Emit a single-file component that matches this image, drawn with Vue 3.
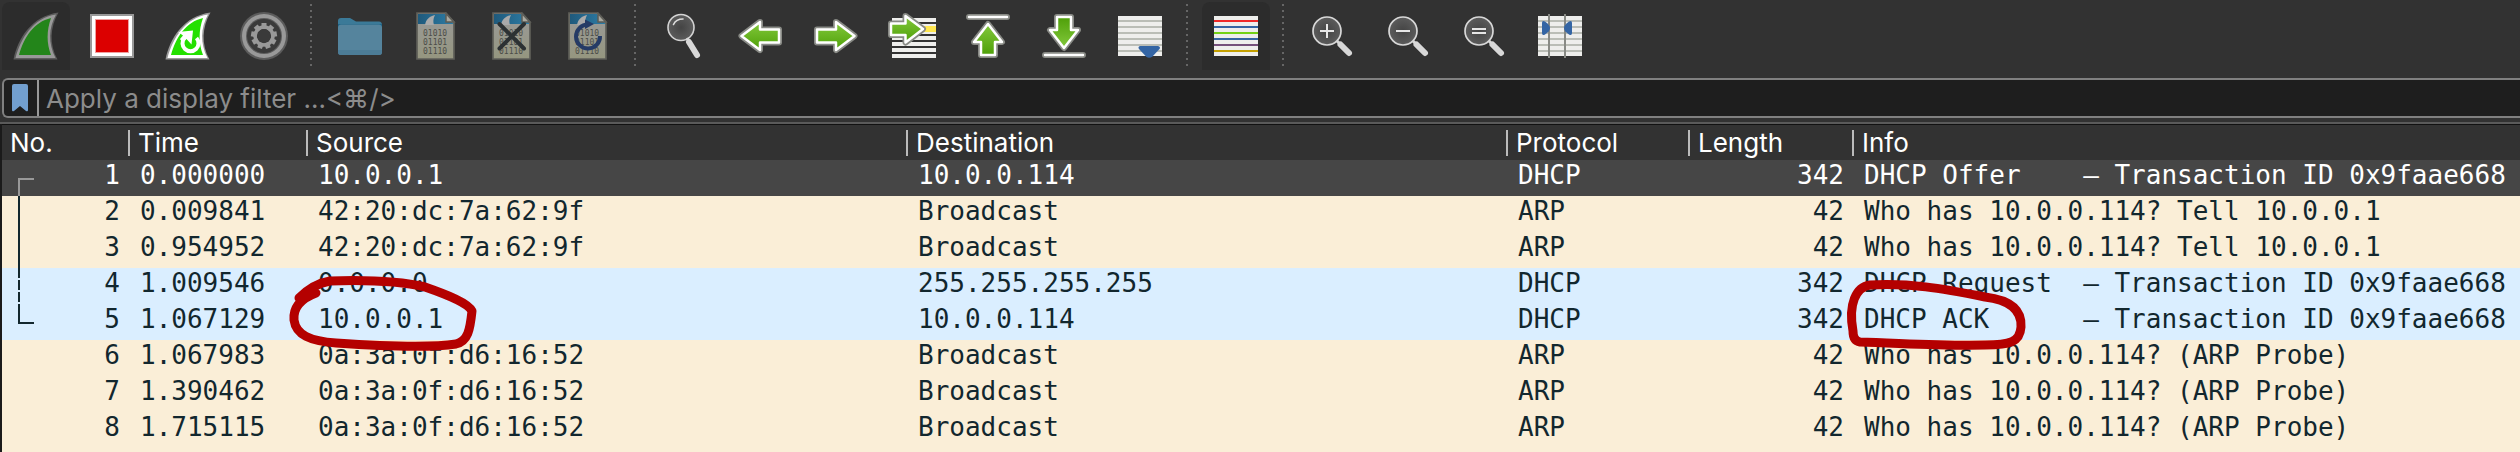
<script setup>
const icons = [
  { id: 'start', label: 'Start capture', on: true },
  { id: 'stop', label: 'Stop capture' },
  { id: 'restart', label: 'Restart capture' },
  { id: 'gear', label: 'Capture options' },
  { id: 'sep1', sep: true },
  { id: 'open', label: 'Open file' },
  { id: 'save', label: 'Save file' },
  { id: 'close', label: 'Close file' },
  { id: 'reload', label: 'Reload file' },
  { id: 'sep2', sep: true },
  { id: 'find', label: 'Find packet' },
  { id: 'prev', label: 'Previous packet' },
  { id: 'next', label: 'Next packet' },
  { id: 'goto', label: 'Go to packet' },
  { id: 'first', label: 'First packet' },
  { id: 'last', label: 'Last packet' },
  { id: 'auto', label: 'Auto scroll' },
  { id: 'sep3', sep: true },
  { id: 'color', label: 'Colorize', on: true },
  { id: 'sep4', sep: true },
  { id: 'zin', label: 'Zoom in' },
  { id: 'zout', label: 'Zoom out' },
  { id: 'znorm', label: 'Normal size' },
  { id: 'cols', label: 'Resize columns' },
]
const sideArrow = 'M5 17.500H24V10L42.500 24L24 38V30.500H5Z'
const upArrow = 'M24 12L38 30H31V43H17V30H10Z'
const arrows = {
  prev: sideArrow,
  next: sideArrow,
  goto: 'M3 11.500H17.500V4L35 17L17.500 30.500V23H3Z',
  first: upArrow,
  last: upArrow,
}
const stripes = ['#ef2929', '#3465a4', '#73d216', '#3465a4', '#75507b', '#c4a000']
const columns = ['No.', 'Time', 'Source', 'Destination', 'Protocol', 'Length', 'Info']
const probe = 'Who has 10.0.0.114? (ARP Probe)'
const tell = 'Who has 10.0.0.114? Tell 10.0.0.1'
const rows = [
  { c: [1, '0.000000', '10.0.0.1', '10.0.0.114', 'DHCP', 342, 'DHCP Offer    – Transaction ID 0x9faae668'], k: 'sel', t: 'M32 19H17V36' },
  { c: [2, '0.009841', '42:20:dc:7a:62:9f', 'Broadcast', 'ARP', 42, tell], k: 'arp', t: 'M17 0V36' },
  { c: [3, '0.954952', '42:20:dc:7a:62:9f', 'Broadcast', 'ARP', 42, tell], k: 'arp', t: 'M17 0V36' },
  { c: [4, '1.009546', '0.0.0.0', '255.255.255.255', 'DHCP', 342, 'DHCP Request  – Transaction ID 0x9faae668'], k: 'dhcp', t: 'M17 0V10M17 12V22M17 24V34' },
  { c: [5, '1.067129', '10.0.0.1', '10.0.0.114', 'DHCP', 342, 'DHCP ACK      – Transaction ID 0x9faae668'], k: 'dhcp', t: 'M17 0V19H32' },
  { c: [6, '1.067983', '0a:3a:0f:d6:16:52', 'Broadcast', 'ARP', 42, probe], k: 'arp' },
  { c: [7, '1.390462', '0a:3a:0f:d6:16:52', 'Broadcast', 'ARP', 42, probe], k: 'arp' },
  { c: [8, '1.715115', '0a:3a:0f:d6:16:52', 'Broadcast', 'ARP', 42, probe], k: 'arp' },
  { c: ['', '', '0a:3a:0f:d6:16:52', 'Broadcast', '', '', probe], k: 'arp' },
]
</script>

<template>
  <main class="app">
    <svg class="defs" aria-hidden="true">
      <defs>
        <linearGradient id="green" x1="0" y1="0" x2="0" y2="1"><stop offset="0" stop-color="#83c93c" /><stop offset="1" stop-color="#4e9f08" /></linearGradient>
        <linearGradient id="paper" x1="0" y1="0" x2="0" y2="1"><stop offset="0" stop-color="#9a9a9a" /><stop offset="1" stop-color="#95967f" /></linearGradient>
        <linearGradient id="sky" x1="0" y1="0" x2="1" y2="0"><stop offset="0" stop-color="#1f597b" /><stop offset="1" stop-color="#2d7ca5" /></linearGradient>
        <radialGradient id="lens"><stop offset="0" stop-color="#444" /><stop offset="1" stop-color="#5c5c5c" /></radialGradient>
      </defs>
    </svg>
    <nav class="toolbar" aria-label="Main toolbar">
      <template v-for="i in icons" :key="i.id">
        <span v-if="i.sep" class="sep"></span>
        <button v-else class="tool" :class="{ on: i.on }" type="button" :aria-label="i.label">
          <svg viewBox="0 0 48 48" width="48" height="48">
            <template v-if="i.id === 'start'">
              <path d="M1.500 47.500C6 26 20 4 46.500.500C38 15 37 32 45.500 47.500Z" fill="#5c5c5c" />
              <path d="M3.500 46C9 26 21 6 44 2.500C36.500 16 36 31 43.500 46Z" fill="#999" />
              <path d="M7 43C12 25 22 10 39 6C34.500 19 34.500 31 39 43Z" fill="#23851a" />
            </template>
            <template v-else-if="i.id === 'stop'">
              <path d="M2 2H46V46H2Z" fill="#999" /><path d="M4 4H44V44H4Z" fill="#fff" />
              <path d="M7 7H41V41H7Z" fill="#f0a0a0" /><path d="M8 8H40V40H8Z" fill="#dc0000" />
            </template>
            <template v-else-if="i.id === 'restart'">
              <path d="M1.500 47.500C6 26 20 4 46.500.500C38 15 37 32 45.500 47.500Z" fill="#999" />
              <path d="M3.500 46C9 26 21 6 44 2.500C36.500 16 36 31 43.500 46Z" fill="#fff" />
              <path d="M7 43C12 25 22 10 39 6C34.500 19 34.500 31 39 43Z" fill="#24e000" />
              <path d="M20.500 26A8 8 0 1 0 32.500 26" fill="none" stroke="#fff" stroke-width="4" />
              <path d="M14 20L29 18.500L27.500 32.500L22.500 27L18 30L16 27L19 23.500Z" fill="#fff" />
            </template>
            <template v-else-if="i.id === 'gear'">
              <circle cx="24" cy="24" r="24" fill="#5c5c5c" /><circle cx="24" cy="24" r="22" fill="#999" />
              <circle cx="24" cy="24" r="18" fill="#5c5c5c" /><circle cx="24" cy="24" r="17" fill="#3a3a3a" />
              <g fill="#999"><rect v-for="n in 9" :key="n" x="21.500" y="11" width="5" height="6" :transform="`rotate(${n * 40 - 40} 24 24)`" /></g>
              <circle cx="24" cy="24" r="9" fill="none" stroke="#999" stroke-width="3.500" />
            </template>
            <template v-else-if="i.id === 'open'">
              <path d="M2 9Q2 6 5 6H14L20 9.500H43Q46 9.500 46 13V20H2Z" fill="#3b7a98" />
              <path d="M2 12H46V15H2Z" fill="#1c6487" /><path d="M2 16Q2 12.500 5 12.500H43Q46 12.500 46 16V40Q46 43 43 43H5Q2 43 2 40Z" fill="#55849d" />
              <path d="M2 38H46V40Q46 43 43 43H5Q2 43 2 40Z" fill="#4c7c96" />
            </template>
            <template v-else-if="i.id === 'save' || i.id === 'close' || i.id === 'reload'">
              <path d="M5 1H34L42 10V47H5Z" fill="url(#paper)" />
              <path d="M6 2H33L41 11V12H6Z" fill="url(#sky)" />
              <path d="M13 13C14 7 18 4 23 3C21 7 21 10 22 13Z" fill="#aaa" />
              <path d="M34 1.500V10H42Z" fill="#aaa9a0" stroke="#5c5c56" stroke-width="1.500" />
              <path d="M5 1H34L42 10V47H5Z" fill="none" stroke="#5e5e58" stroke-width="1.700" />
              <g class="bits"><text x="11" y="24">01010</text><text x="11" y="33">01101</text><text x="11" y="42">01110</text></g>
              <path v-if="i.id === 'close'" d="M11.500 12L36 36.500M36 12L11.500 36.500" stroke="#2c3133" stroke-width="4" stroke-linecap="round" />
              <template v-if="i.id === 'reload'">
                <path d="M24 12.500A12 12 0 1 0 36 24" fill="none" stroke="#253b66" stroke-width="4" />
                <path d="M21 7.500L30 12L21 17Z" fill="#253b66" />
              </template>
            </template>
            <template v-else-if="i.id === 'find'">
              <circle cx="21" cy="15.500" r="13" fill="url(#lens)" stroke="#d3d3d3" stroke-width="1.600" />
              <path d="M13.500 12.500Q16 7 23 7" fill="none" stroke="#ddd" stroke-width="1.600" stroke-linecap="round" />
              <path d="M29 30L37 43" stroke="#d8d8d8" stroke-width="6" stroke-linecap="round" /><path d="M27 26L30 31" stroke="#d8d8d8" stroke-width="3" />
            </template>
            <template v-else-if="arrows[i.id]">
              <template v-if="i.id === 'goto'">
                <path v-for="n in 7" :key="n" :d="`M4 ${n * 6 + 2}H48`" stroke="#eeeeec" stroke-width="4" />
                <path d="M30 14H48V20H30Z" fill="#ffe750" />
              </template>
              <g :class="i.id" stroke-linejoin="round">
                <path :d="arrows[i.id]" fill="none" stroke="#888a85" stroke-width="6" />
                <path :d="arrows[i.id]" fill="url(#green)" stroke="#fff" stroke-width="2.500" />
                <template v-if="i.id === 'first' || i.id === 'last'">
                  <path d="M5 5H43" stroke="#888a85" stroke-width="6" stroke-linecap="round" />
                  <path d="M5 5H43" stroke="#fff" stroke-width="2.500" stroke-linecap="round" />
                </template>
              </g>
            </template>
            <template v-else-if="i.id === 'auto' || i.id === 'color' || i.id === 'cols'">
              <path d="M2 4H46V44H2Z" fill="#eeeeec" />
              <path v-for="(s, n) in stripes" :key="n" :d="`M2 ${n * 6 + 9}H46`" :stroke="i.id === 'color' ? s : '#babdb6'" stroke-width="2" />
              <path v-if="i.id === 'auto'" d="M24 34H42Q45 35 43.500 37L36.500 44.500Q33 47 30 44.500L23 37Q21.500 35 24 34Z" fill="#3465a4" />
              <template v-if="i.id === 'cols'">
                <path d="M13 2V46M29 2V46" stroke="#888a85" stroke-width="2" />
                <path d="M6 11Q6 8 9 9.500Q14 13 14 16Q14 19 9 22.500Q6 24 6 21Z" fill="#3465a4" />
                <path d="M36 11Q36 8 33 9.500Q28 13 28 16Q28 19 33 22.500Q36 24 36 21Z" fill="#3465a4" />
              </template>
            </template>
            <template v-else>
              <circle cx="19" cy="19" r="14" fill="url(#lens)" stroke="#d8d8d8" stroke-width="1.700" />
              <path d="M32.500 32.500L41 41" stroke="#d8d8d8" stroke-width="6" stroke-linecap="round" /><path d="M29 29L34 34" stroke="#d8d8d8" stroke-width="3" />
              <path :d="i.id === 'zin' ? 'M12 19H26M19 12V26' : i.id === 'zout' ? 'M12 19H26' : 'M12 17H26M12 21H26'" stroke="#e6e6e6" stroke-width="2" />
            </template>
          </svg>
        </button>
      </template>
    </nav>

    <form class="filter" @submit.prevent>
      <button type="button" class="bookmark" aria-label="Filter bookmarks">
        <svg viewBox="0 0 16 28" width="16" height="28"><path d="M0 2Q0 0 2 0H14Q16 0 16 2V26Q16 28 14 27L8 22L2 27Q0 28 0 26Z" fill="#729fcf" /></svg>
      </button>
      <input type="text" aria-label="Display filter" placeholder="Apply a display filter …<⌘/>" />
    </form>

    <section class="packets">
      <table>
        <colgroup><col v-for="c in columns" :key="c" :class="'c-' + c.toLowerCase().replace('.', '')" /></colgroup>
        <thead><tr><th v-for="c in columns" :key="c" scope="col"><span>{{ c }}</span></th></tr></thead>
        <tbody>
          <tr v-for="(r, ri) in rows" :key="ri" :class="r.k">
            <td v-for="(v, n) in r.c" :key="n" :class="{ num: n === 0 || n === 5 }">
              <svg v-if="n === 0 && r.t" class="tree" viewBox="0 0 36 36" width="36" height="36"><path :d="r.t" fill="none" stroke="currentColor" stroke-width="2" /></svg>{{ v }}
            </td>
          </tr>
        </tbody>
      </table>
      <svg class="mark source" viewBox="280 265 220 95" width="220" height="95" aria-hidden="true">
        <path d="M316 293C300 299 293 308 294 320C296 335 310 341 336 343C380 346 430 348 456 344C468 341 470 330 472 311C468 303 448 295 425 287C395 280 360 280 330 281C318 283 308 289 299 298" />
      </svg>
      <svg class="mark info" viewBox="1840 270 200 90" width="200" height="90" aria-hidden="true">
        <path d="M1853 331C1848 304 1856 287 1870 285C1910 283 1940 288 1985 297C2010 300 2022 310 2021 327C2020 342 2010 345 1985 345C1940 346 1900 343 1860 342C1854 341 1853 336 1853 331Z" />
      </svg>
    </section>
  </main>
</template>

<style>
html, body { height: 100%; background: #323232; }
body { overflow: hidden; }
</style>
<style scoped>
* { box-sizing: border-box; }
.app { background: #323232; font-family: Inter, "Liberation Sans", sans-serif; overflow: hidden; height: 100vh; }
.defs { position: absolute; width: 0; height: 0; }
.toolbar { display: flex; height: 78px; padding: 2px 0 0 2px; }
.tool { display: flex; flex: none; align-items: center; justify-content: center; width: 68px; height: 68px; margin-right: 8px; padding: 0; border: 0; border-radius: 8px 8px 0 0; background: none; }
.tool.on { background: #2c2c2c; }
.sep { flex: none; width: 2px; height: 62px; margin: 2px 14px 0 4px; background: repeating-linear-gradient(#666 0 2px, transparent 2px 6px); }
.bits text { font: 8px "DejaVu Sans Mono", monospace; fill: #4c4d48; }
.last { transform: rotate(180deg); transform-origin: 24px 24px; }
.prev { transform: scaleX(-1); transform-origin: 24px 24px; }
.filter { display: flex; height: 40px; margin-left: 2px; border: 2px solid #808080; border-right: 0; border-radius: 6px 0 0 6px; background: #1e1e1e; }
.bookmark { display: flex; align-items: center; width: 35px; margin: 0; padding: 0 0 0 8px; border: 0; border-right: 2px solid #999; background: none; }
.filter input { flex: 1; min-width: 0; padding: 0 0 0 7px; border: 0; outline: 0; background: none; color: #fff; font: 26px Inter, "Liberation Sans", sans-serif; }
.filter input::placeholder { color: #8c8c8c; opacity: 1; }
.packets { position: relative; margin-top: 4px; border-top: 2px solid #5a5a5a; }
table { width: 100%; table-layout: fixed; border-collapse: separate; border-spacing: 0; border-left: 2px solid #1a1a1a; }
.c-no { width: 128px; }
.c-time { width: 178px; }
.c-source, .c-destination { width: 600px; }
.c-protocol { width: 182px; }
.c-length { width: 164px; }
th { height: 36px; padding: 0; border-top: 1px solid #111; color: #fff; font-size: 26px; font-weight: 400; text-align: left; }
th span { display: block; height: 26px; line-height: 26px; padding-left: 8px; border-right: 2px solid #bbb; }
th:last-child span { border: 0; }
td { position: relative; height: 36px; padding: 0 0 6px 10px; overflow: hidden; font: 26px/30px "DejaVu Sans Mono", monospace; white-space: pre; color: #12272e; }
td.num { padding-right: 10px; text-align: right; }
.tree { position: absolute; left: 0; top: 0; }
.arp { background: #faeed7; }
.dhcp { background: #daeeff; }
.sel { background: #464646; }
.sel td { color: #fff; }
.sel .tree { color: #999; }
.mark { position: absolute; overflow: visible; fill: none; stroke: #b40000; stroke-width: 9; stroke-linecap: round; stroke-linejoin: round; pointer-events: none; }
.mark.source { left: 280px; top: 141px; }
.mark.info { left: 1840px; top: 146px; }
</style>
